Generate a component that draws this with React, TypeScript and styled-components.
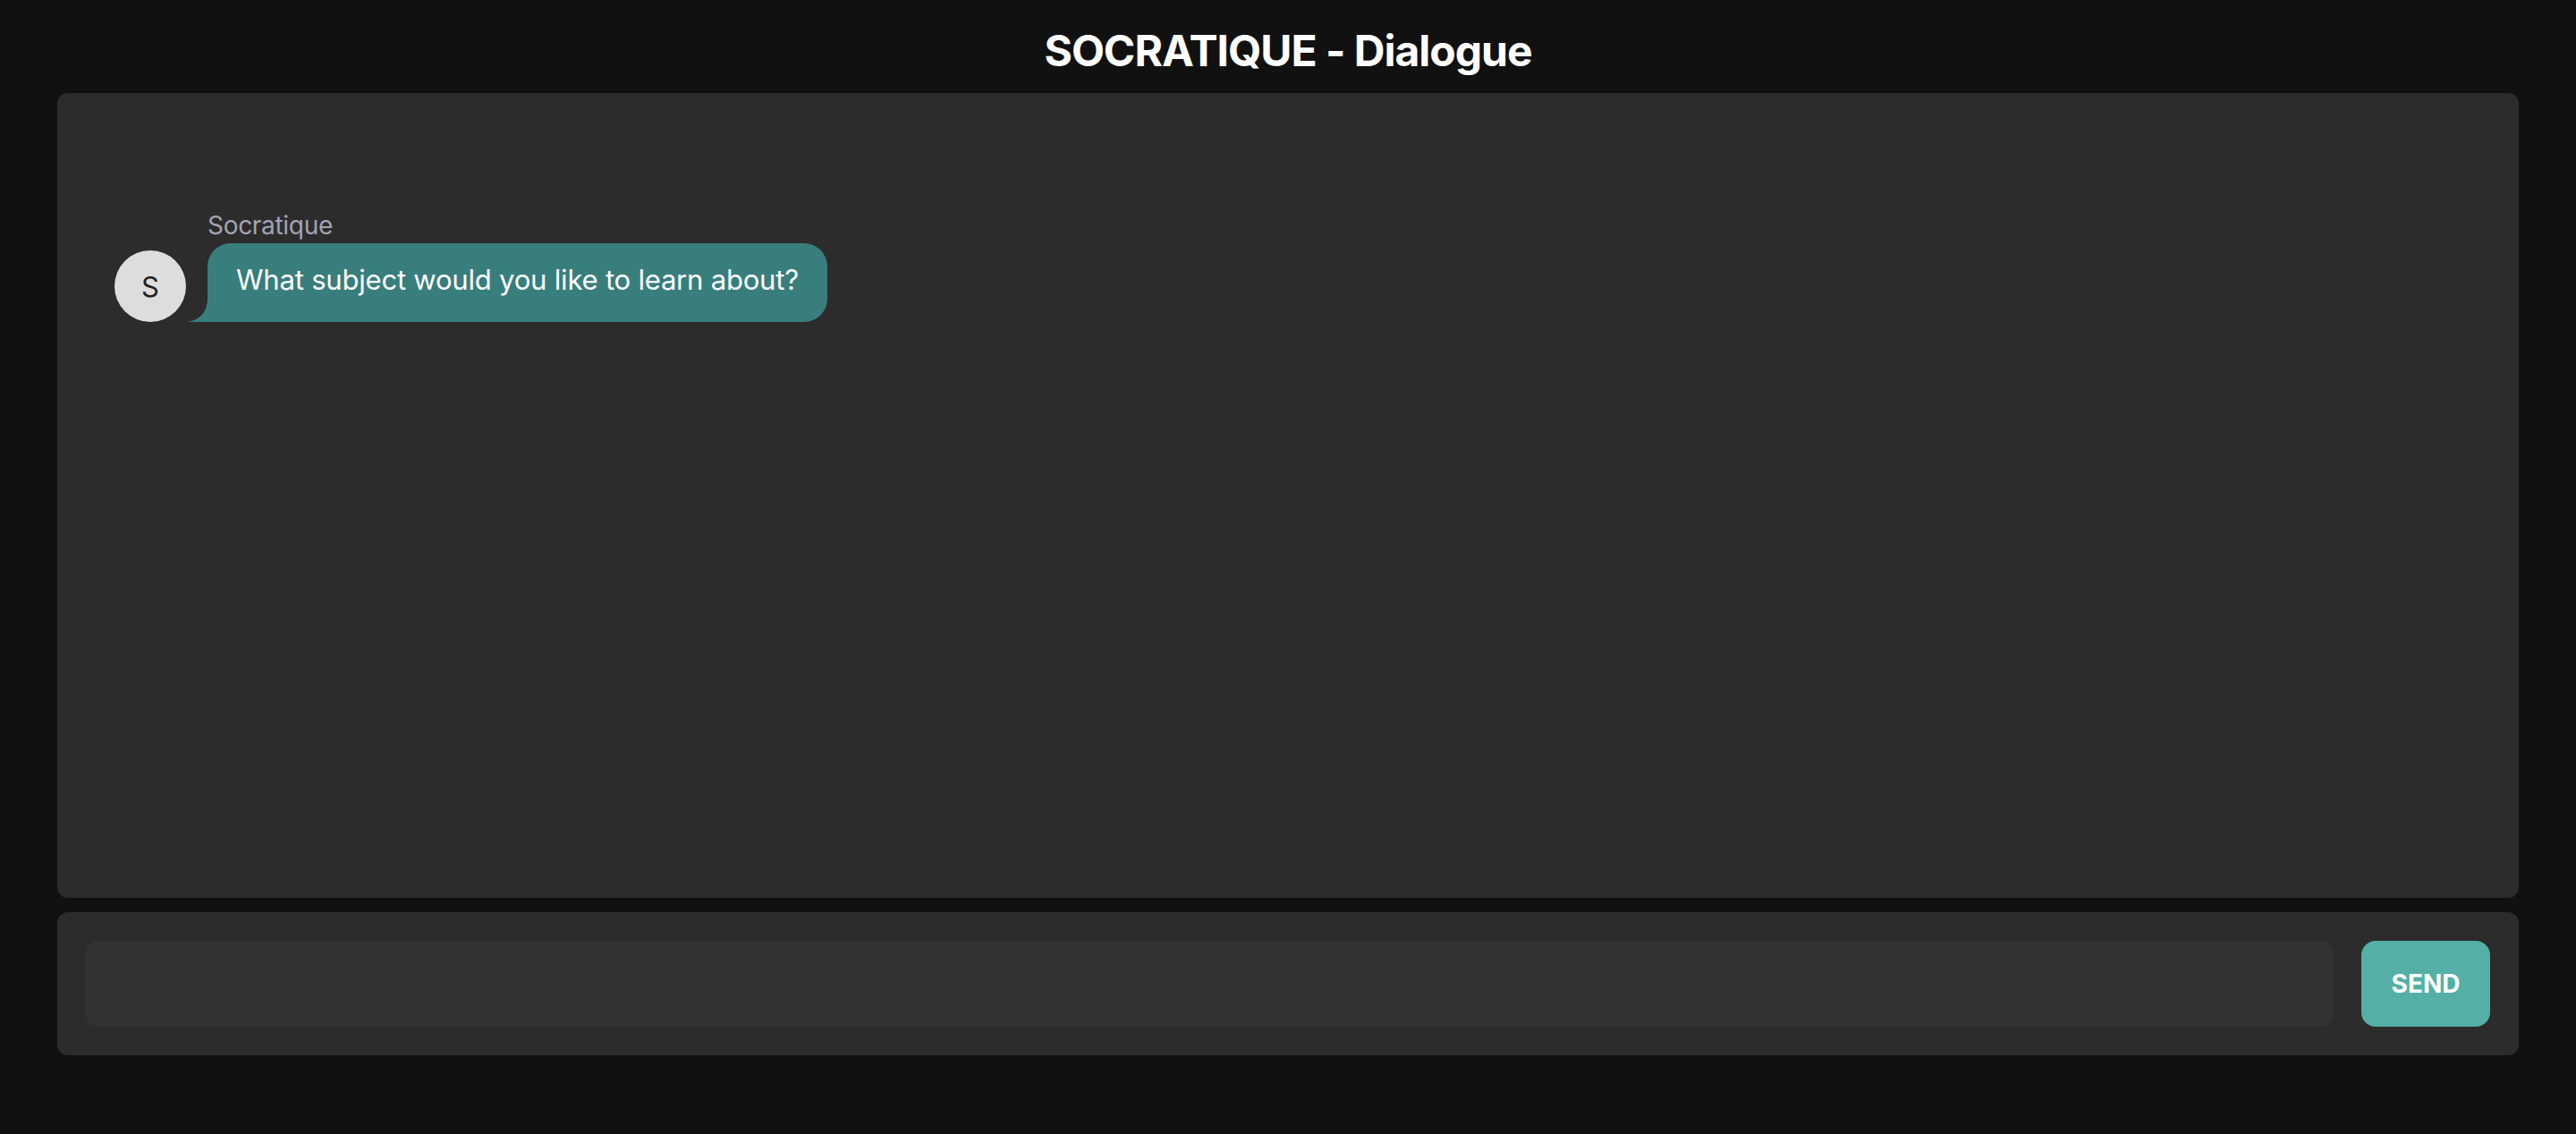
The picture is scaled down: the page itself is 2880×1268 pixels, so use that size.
import React from "react";
import styled, { createGlobalStyle } from "styled-components";

const GlobalStyle = createGlobalStyle`
  html, body {
    margin: 0;
    padding: 0;
    background: #111111;
  }
  body {
    font-family: Inter, "Noto Sans", "Liberation Sans", sans-serif;
    color: #ffffff;
  }
  * {
    box-sizing: border-box;
  }
`;

const Page = styled.div`
  height: 100vh;
  display: flex;
  flex-direction: column;
  padding: 28px 64px 88px;
`;

const Title = styled.h1`
  margin: 0 0 18px;
  text-align: center;
  font-size: 48px;
  font-weight: 700;
  line-height: 58px;
  letter-spacing: -1px;
  color: #ffffff;
`;

const ChatPanel = styled.div`
  flex: 1;
  background: #2c2c2c;
  border-radius: 12px;
  padding: 131px 64px 64px;
  display: flex;
  flex-direction: column;
  gap: 32px;
  overflow-y: auto;
`;

const MessageRow = styled.div`
  display: flex;
  align-items: flex-end;
  gap: 24px;
`;

const Avatar = styled.div`
  width: 80px;
  height: 80px;
  flex-shrink: 0;
  border-radius: 50%;
  background: #dddddd;
  color: #222222;
  font-size: 31px;
  display: flex;
  align-items: center;
  justify-content: center;
`;

const MessageBody = styled.div`
  display: flex;
  flex-direction: column;
  align-items: flex-start;
`;

const Sender = styled.div`
  font-size: 28px;
  line-height: 34px;
  letter-spacing: -0.3px;
  color: #a3a3b3;
  margin-bottom: 3px;
`;

const Bubble = styled.div<{ $color: string }>`
  position: relative;
  background: ${(p) => p.$color};
  color: #ffffff;
  font-size: 31px;
  line-height: 48px;
  letter-spacing: -0.2px;
  padding: 17px 32px 23px;
  border-radius: 26px 26px 26px 0;

  &::before {
    content: "";
    position: absolute;
    left: -24px;
    bottom: 0;
    width: 24px;
    height: 24px;
    background: radial-gradient(
      circle at 0 0,
      transparent 23.5px,
      ${(p) => p.$color} 24px
    );
  }
`;

const InputBar = styled.form`
  margin-top: 16px;
  background: #2c2c2c;
  border-radius: 12px;
  padding: 32px;
  display: flex;
  gap: 32px;
`;

const TextInput = styled.input`
  flex: 1;
  height: 96px;
  border: none;
  outline: none;
  border-radius: 14px;
  background: #333333;
  color: #ffffff;
  font-family: inherit;
  font-size: 30px;
  padding: 0 28px;
`;

const SendButton = styled.button`
  width: 144px;
  height: 96px;
  border: none;
  border-radius: 16px;
  background: #54b0a6;
  color: #ffffff;
  font-family: inherit;
  font-size: 28px;
  font-weight: 700;
  cursor: pointer;
`;

const messages = [
  { sender: "Socratique", text: "What subject would you like to learn about?" },
];

export default function App() {
  return (
    <>
      <GlobalStyle />
      <Page>
        <Title>SOCRATIQUE - Dialogue</Title>
        <ChatPanel>
          {messages.map((m, i) => (
            <MessageRow key={i}>
              <Avatar>{m.sender[0]}</Avatar>
              <MessageBody>
                <Sender>{m.sender}</Sender>
                <Bubble $color="#377e7d">{m.text}</Bubble>
              </MessageBody>
            </MessageRow>
          ))}
        </ChatPanel>
        <InputBar onSubmit={(e) => e.preventDefault()}>
          <TextInput type="text" />
          <SendButton type="submit">SEND</SendButton>
        </InputBar>
      </Page>
    </>
  );
}
